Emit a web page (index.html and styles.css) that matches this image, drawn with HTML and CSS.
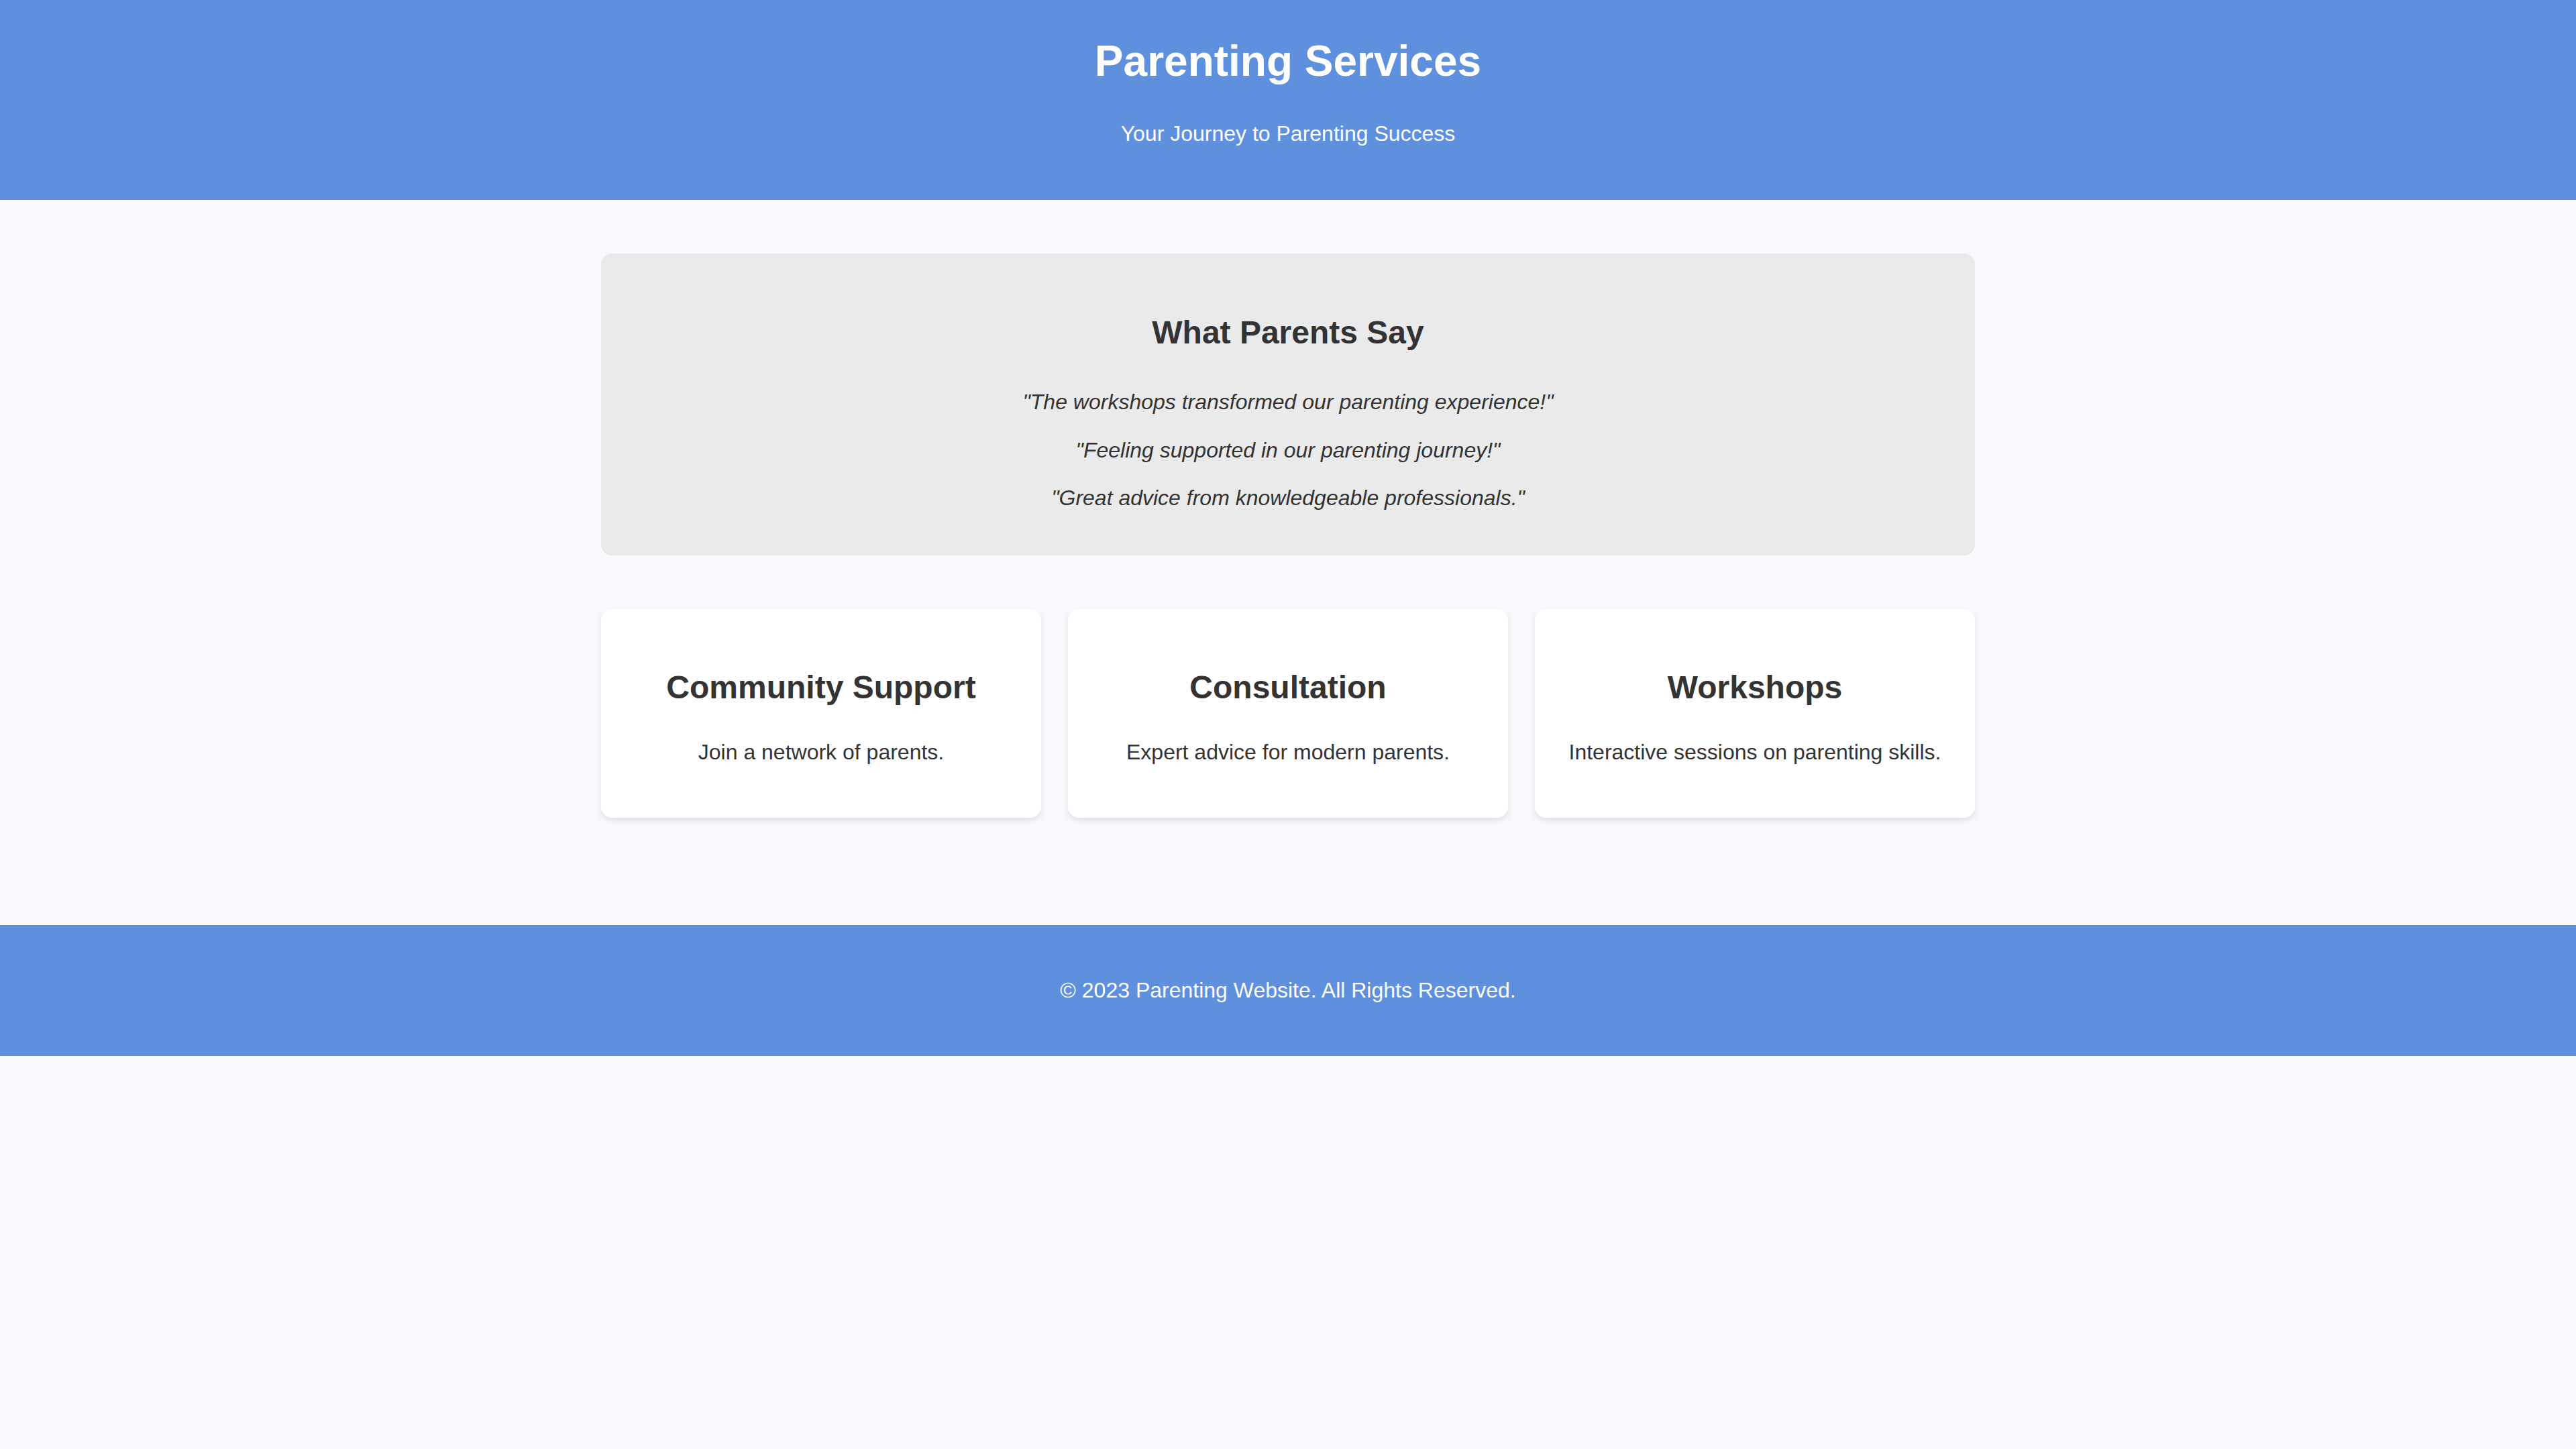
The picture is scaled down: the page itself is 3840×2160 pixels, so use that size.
FILE: index.html
```html
<!DOCTYPE html>
<html lang="en">
<head>
<meta charset="utf-8">
<title>Parenting Services</title>
<link rel="stylesheet" href="styles.css">
</head>
<body>
<header class="site-header">
  <h1 class="site-title">Parenting Services</h1>
  <p class="site-tagline">Your Journey to Parenting Success</p>
</header>
<main class="main">
  <section class="testimonials">
    <h2 class="testimonials-title">What Parents Say</h2>
    <p class="quote">"The workshops transformed our parenting experience!"</p>
    <p class="quote">"Feeling supported in our parenting journey!"</p>
    <p class="quote">"Great advice from knowledgeable professionals."</p>
  </section>
  <section class="services">
    <div class="card">
      <h2 class="card-title">Community Support</h2>
      <p class="card-text">Join a network of parents.</p>
    </div>
    <div class="card">
      <h2 class="card-title">Consultation</h2>
      <p class="card-text">Expert advice for modern parents.</p>
    </div>
    <div class="card">
      <h2 class="card-title">Workshops</h2>
      <p class="card-text">Interactive sessions on parenting skills.</p>
    </div>
  </section>
</main>
<footer class="site-footer">
  <p class="footer-text">© 2023 Parenting Website. All Rights Reserved.</p>
</footer>
</body>
</html>
```

FILE: styles.css
```css
html, body {
  margin: 0;
  padding: 0;
}

body {
  background: #f7f9fc;
  color: #333333;
  font-family: "Liberation Sans", Arial, sans-serif;
  font-size: 32px;
  line-height: 1.6;
}

.site-header {
  background: #5e90dd;
  color: #ffffff;
  text-align: center;
  padding: 40px 0;
}

.site-title {
  margin: 0;
  font-size: 64px;
  font-weight: bold;
}

.site-tagline {
  margin: 32px 0;
  font-size: 32px;
}

.main {
  max-width: 2048px;
  margin: 0 auto;
  padding: 80px 0 160px;
}

.testimonials {
  background: #eaeaea;
  border-radius: 16px;
  padding: 40px;
  text-align: center;
}

.testimonials-title {
  margin: 40px 0;
  font-size: 48px;
}

.quote {
  margin: 0 0 20px;
  font-style: italic;
}

.services {
  display: flex;
  gap: 40px;
  margin-top: 80px;
}

.card {
  flex: 1 1 0;
  background: #ffffff;
  border-radius: 16px;
  padding: 40px;
  text-align: center;
  box-shadow: 0 4px 10px rgba(0, 0, 0, 0.1);
}

.card-title {
  margin: 39px 0 32px;
  font-size: 48px;
}

.card-text {
  margin: 0 0 32px;
}

.site-footer {
  background: #5e90dd;
  color: #ffffff;
  text-align: center;
  padding: 40px 0;
}

.footer-text {
  margin: 32px 0;
}
```
